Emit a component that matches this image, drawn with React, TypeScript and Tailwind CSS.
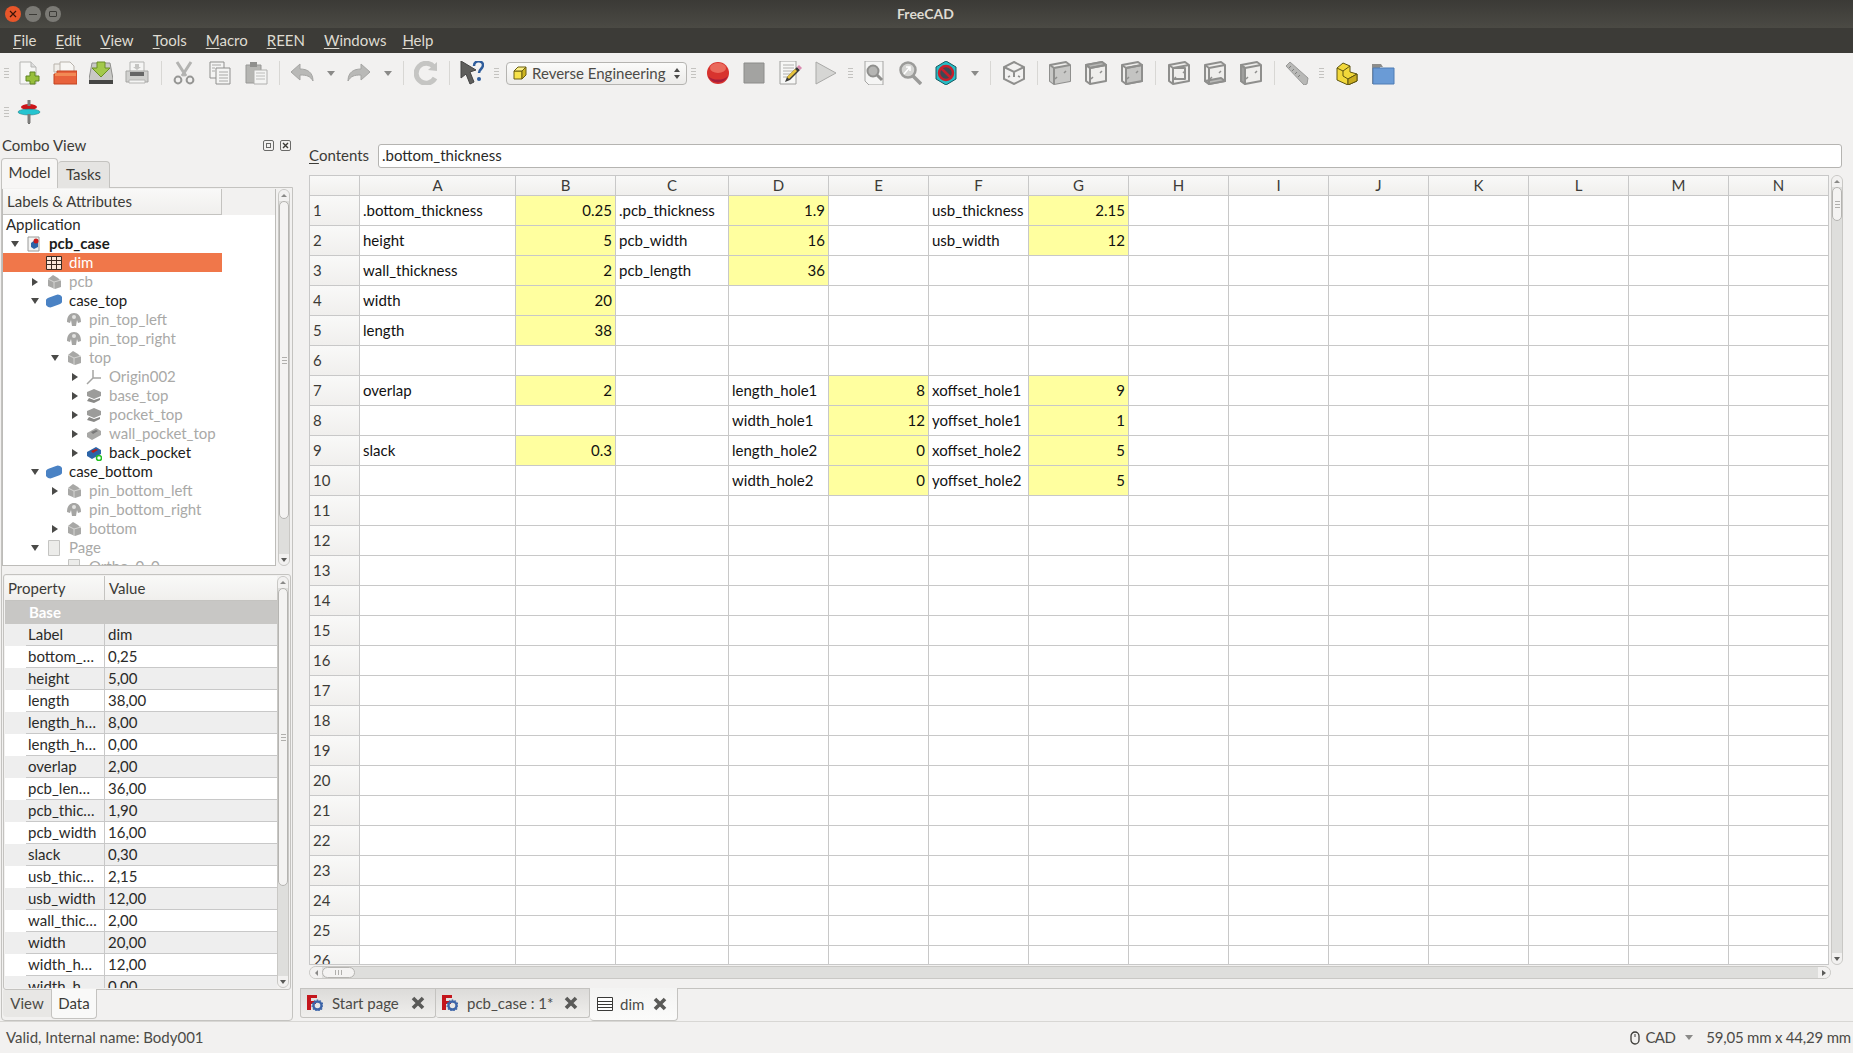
import React from "react";

const FONT = "font-['Lato','Noto_Sans',sans-serif]";

const Grip = () => (
  <div className="flex h-6 w-[12px] shrink-0 flex-col items-center justify-center gap-[2px]">
    <span className="h-px w-[5px] bg-[#c4c3c0]" />
    <span className="h-px w-[5px] bg-[#c4c3c0]" />
    <span className="h-px w-[5px] bg-[#c4c3c0]" />
    <span className="h-px w-[5px] bg-[#c4c3c0]" />
  </div>
);

const Sep = () => (
  <div className="flex h-6 w-[10px] shrink-0 justify-center">
    <span className="h-6 w-px bg-[#d8d7d4]" />
  </div>
);

const Slot = ({ children }: { children: React.ReactNode }) => (
  <div className="flex h-[26px] w-9 shrink-0 items-center justify-center">{children}</div>
);

const Drop = () => (
  <div className="flex w-[21px] shrink-0 justify-center">
    <span className="h-0 w-0 border-x-[4px] border-t-[5px] border-x-transparent border-t-[#8a8a88]" />
  </div>
);

const Ico = ({ children, s = 24 }: { children: React.ReactNode; s?: number }) => (
  <svg width={s} height={s} viewBox="0 0 24 24">
    {children}
  </svg>
);

const NewIcon = () => (
  <Ico>
    <path d="M3 1h11l5 5v17H3z" fill="#f6f6f5" stroke="#b5b5b3" />
    <path d="M14 1v5h5" fill="#ddd" stroke="#b5b5b3" />
    <path d="M14 12h5v4h4v5h-4v3h-5v-3h-4v-5h4z" transform="translate(-1 -1)" fill="#98bf3c" stroke="#5f8520" />
  </Ico>
);
const OpenIcon = () => (
  <Ico>
    <path d="M1 3h9l2 2v6H1z" fill="#f0eeea" stroke="#b9b3ac" />
    <path d="M7 1h10l4 4v8H7z" fill="#f7f6f4" stroke="#b9b3ac" />
    <path d="M4 10h20v13H1V13h3z" fill="#e8623c" stroke="#c2421f" />
    <path d="M2 12h21v3H2z" fill="#f28a55" />
  </Ico>
);
const SaveIcon = () => (
  <Ico>
    <path d="M3 2h18l3 16v4H0v-4z" fill="#c9c9c6" stroke="#8f8f8c" />
    <path d="M0 19h24v4H0z" fill="#464644" />
    <path d="M8 1h8v6h5l-9 9-9-9h5z" fill="#a3c94a" stroke="#6a8e25" />
  </Ico>
);
const PrintIcon = () => (
  <Ico>
    <path d="M5 1h14v10H5z" fill="#f5f5f4" stroke="#b5b5b3" />
    <path d="M1 10h22v11H1z" fill="#d0d0ce" stroke="#a5a5a3" />
    <path d="M5 11h14v4H5z" fill="#666" />
    <path d="M4 19h16v3H4z" fill="#f5f5f4" stroke="#b5b5b3" />
    <path d="M10 3h4v3h2l-4 3-4-3h2z" fill="#c5c5c3" />
  </Ico>
);
const CutIcon = () => (
  <Ico>
    <path d="M5 1l9 14M19 1l-9 14" stroke="#b3b3b1" strokeWidth="3" fill="none" />
    <circle cx="6" cy="19" r="3.4" fill="none" stroke="#969694" strokeWidth="2" />
    <circle cx="18" cy="19" r="3.4" fill="none" stroke="#969694" strokeWidth="2" />
  </Ico>
);
const CopyIcon = () => (
  <Ico>
    <path d="M2 1h14v16H2z" fill="#f4f4f3" stroke="#8f8f8d" />
    <path d="M8 7h14v16H8z" fill="#f4f4f3" stroke="#8f8f8d" />
    <path d="M4 4h9M4 7h3M4 10h3M11 11h9M11 14h9M11 17h9M11 20h9" stroke="#a8a8a6" />
  </Ico>
);
const PasteIcon = () => (
  <Ico>
    <path d="M2 4h15v18H2z" fill="#b5b5b2" stroke="#989896" />
    <path d="M6 1h7v5H6z" fill="#8f8f8d" />
    <path d="M10 9h13v14H10z" fill="#f4f4f3" stroke="#b0b0ae" />
    <path d="M12 12h9M12 15h9M12 18h9" stroke="#bcbcba" />
  </Ico>
);
const UndoIcon = ({ flip }: { flip?: boolean }) => (
  <Ico>
    <g transform={flip ? "translate(24 0) scale(-1 1)" : undefined}>
      <path d="M1 11l9-8v5c7 0 13 3 13 12-3-5-6-6-13-6v5z" fill="#b9b9b7" stroke="#a5a5a3" strokeLinejoin="round" />
    </g>
  </Ico>
);
const RefreshIcon = () => (
  <Ico>
    <path d="M20 6a10 10 0 1 0 1 11" fill="none" stroke="#c5c5c3" strokeWidth="5" />
    <path d="M14 9l9 1V1z" fill="#c5c5c3" />
  </Ico>
);
const WhatIcon = () => (
  <Ico>
    <path d="M1 0l15 9-6 2 4 10-4 2-4-10-5 4z" fill="#5e5e5c" stroke="#444" strokeLinejoin="round" />
    <path d="M14 5c0-6 9-6 9-1 0 4-4 4-4 8" fill="none" stroke="#2f5d9c" strokeWidth="2.5" />
    <circle cx="19" cy="18" r="2" fill="#2f5d9c" />
  </Ico>
);
const YellowBox = ({ s = 14 }: { s?: number }) => (
  <svg width={s} height={s} viewBox="0 0 14 14">
    <path d="M1 5h8v8H1z" fill="#f6e24a" stroke="#6a5f10" />
    <path d="M1 5l4-4h8L9 5z" fill="#fbf08a" stroke="#6a5f10" />
    <path d="M9 5l4-4v8l-4 4z" fill="#cdb420" stroke="#6a5f10" />
  </svg>
);
const RecordIcon = () => (
  <Ico>
    <circle cx="12" cy="12" r="11" fill="#d8332e" />
    <ellipse cx="12" cy="7" rx="8" ry="5" fill="#ea6a5c" />
    <path d="M2 15a11 11 0 0 0 20 0 12 8 0 0 1-20 0z" fill="#a81e3a" />
  </Ico>
);
const StopIcon = () => (
  <Ico>
    <path d="M2 2h20v20H2z" fill="#a3a3a1" stroke="#8c8c8a" />
  </Ico>
);
const EditIcon = () => (
  <Ico>
    <path d="M2 0h16v23H2z" fill="#f7f7f6" stroke="#a0a09e" />
    <path d="M5 4h11M5 7h11M5 10h11M5 13h7M5 16h5" stroke="#b0b0ae" />
    <path d="M7 21l2-5 10-10 3 3-10 10z" fill="#3a3a38" />
    <path d="M19 6l2-2 3 3-2 2z" fill="#d98ab0" />
    <path d="M9 16l8-8 2 2-8 8z" fill="#e6c23c" />
  </Ico>
);
const PlayIcon = () => (
  <Ico>
    <path d="M2 1l20 11L2 23z" fill="#d6d6d4" stroke="#a9a9a7" />
  </Ico>
);
const FitIcon = () => (
  <Ico>
    <path d="M3 0h18v24H7l-4-4z" fill="#f5f5f4" stroke="#a5a5a3" />
    <circle cx="11" cy="10" r="5.5" fill="#b5b5b3" stroke="#8f8f8d" strokeWidth="2" />
    <path d="M15 14l5 5" stroke="#8f8f8d" strokeWidth="3" />
  </Ico>
);
const ZoomSelIcon = () => (
  <Ico>
    <circle cx="10" cy="9" r="7.5" fill="#d5d5d3" stroke="#9b9b99" strokeWidth="2.5" />
    <path d="M15 15l8 8" stroke="#9b9b99" strokeWidth="3.5" />
    <path d="M6 13l6-7m-4 0h4v4" stroke="#fff" strokeWidth="1.5" fill="none" />
  </Ico>
);
const NoColorIcon = () => (
  <Ico>
    <path d="M12 0l10 6v12l-10 6-10-6V6z" fill="#26bcc4" stroke="#175a62" />
    <circle cx="12" cy="12" r="7" fill="#3d4a55" stroke="#c8202c" strokeWidth="2.5" />
    <path d="M7.5 7.5l9 9" stroke="#c8202c" strokeWidth="2.5" />
  </Ico>
);
const CubeIcon = ({ v }: { v: string }) => (
  <Ico>
    {v === "iso" ? (
      <g fill="none" stroke="#8f8f8d" strokeWidth="2">
        <path d="M12 1l10 5v12l-10 5-10-5V6z" />
        <path d="M2 6l10 5 10-5M12 11v5" />
        <path d="M6 16l2-1M18 16l-2-1" strokeWidth="1.5" />
      </g>
    ) : (
      <g stroke="#8f8f8d" strokeWidth="2" strokeLinejoin="round">
        <path d="M2 4l16-3 4 3v16l-16 3-4-3z" fill="#efeeec" />
        {v === "front" && <path d="M2 4l4 2v17l-4-3zM6 6l16-2v16l-16 3z" fill="#c8c8c6" stroke="none" />}
        {v === "top" && <path d="M2 4l16-3 4 3-16 3z" fill="#b9b9b7" />}
        {v === "right" && <path d="M6 7l16-3v16l-16 3z" fill="#c4c4c2" />}
        {v === "rear" && <path d="M6 7h12v11H6z" fill="#efeeec" />}
        {v === "bottom" && <path d="M2 20l4 3 16-3-4-3z" fill="#b9b9b7" />}
        {v === "left" && <path d="M2 4l4 3v16l-4-3z" fill="#9f9f9d" />}
        <path d="M2 4l4 3 16-3M6 7v16" fill="none" />
        <path d="M7 18l2-2M16 12l2-2" strokeWidth="1.5" />
      </g>
    )}
  </Ico>
);
const RulerIcon = () => (
  <Ico>
    <path d="M1 5l4-4 18 16-1 6-3 1z" fill="#b8b8b6" stroke="#9a9a98" />
    <path d="M6 5l-2 2M9 8l-2 2M12 11l-2 2M15 14l-2 2" stroke="#7f7f7d" />
  </Ico>
);
const PartIcon = () => (
  <Ico>
    <path d="M2 7l6-5 7 3v6l7 2v7l-9 4-11-5z" fill="#f2d83a" stroke="#5e5410" strokeLinejoin="round" />
    <path d="M2 7l6 3 7-5M8 10v5l5 3 9-5M13 18v6" fill="none" stroke="#5e5410" />
    <path d="M13 18l9-5v7l-9 4z" fill="#c9ac1e" stroke="#5e5410" />
  </Ico>
);
const FolderIcon = () => (
  <Ico>
    <path d="M1 3h9l2 3h-3v17H1z" fill="#8d8d8b" />
    <path d="M2 7h21v16H2z" fill="#6a9bd6" stroke="#4f7cb5" />
  </Ico>
);
const PinIcon = () => (
  <Ico>
    <path d="M11 0h2v24h-2z" fill="#70706e" />
    <ellipse cx="12" cy="7" rx="8" ry="3" fill="#cc1418" />
    <ellipse cx="12" cy="12" rx="11" ry="3" fill="#25c4d0" stroke="#15727a" strokeWidth="0.5" />
    <path d="M10.5 0h3v6h-3zM10.5 14h3v9h-3z" fill="#7c7c7a" />
  </Ico>
);

const Arrow = ({ open }: { open?: boolean }) =>
  open ? (
    <span className="h-0 w-0 border-x-[4px] border-t-[6px] border-x-transparent border-t-[#4a4a48]" />
  ) : (
    <span className="h-0 w-0 border-y-[4px] border-l-[6px] border-y-transparent border-l-[#4a4a48]" />
  );

const GrayBody = () => (
  <svg width="16" height="16" viewBox="0 0 16 16">
    <path d="M2 5l5-4 5 3 3 3v6l-6 2-7-3z" fill="#a8a8a6" />
    <path d="M2 5l6 3v7M8 8l7-2" fill="none" stroke="#d5d5d3" />
  </svg>
);
const Blob = () => (
  <svg width="16" height="16" viewBox="0 0 16 16">
    <rect x="-1" y="3" width="18" height="10" rx="5" transform="rotate(-20 8 8)" fill="#4a82c4" />
  </svg>
);
const PinBody = () => (
  <svg width="16" height="16" viewBox="0 0 16 16">
    <path d="M1 10c0-6 3-9 7-9s7 3 7 9l-3 1-1-3-1 6H6L5 8l-1 3z" fill="#a5a5a3" />
    <circle cx="8" cy="5" r="2" fill="#e2e2e0" />
  </svg>
);
const OriginIcon = () => (
  <svg width="16" height="16" viewBox="0 0 16 16">
    <path d="M7 1v8M7 9l-6 6M7 9h8" stroke="#a5a5a3" strokeWidth="1.5" fill="none" />
  </svg>
);
const StackIcon = () => (
  <svg width="16" height="16" viewBox="0 0 16 16">
    <path d="M1 4l7-3 7 3v4l-7 3-7-3z" fill="#9c9c9a" />
    <path d="M3 10l5 2 6-2v2l-6 3-7-2z" fill="#8a8a88" />
  </svg>
);
const PadIcon = () => (
  <svg width="16" height="16" viewBox="0 0 16 16">
    <path d="M1 7l9-5 5 3v4l-9 5-5-3z" fill="#a8a8a6" />
    <path d="M5 6l5-2 2 1-5 3z" fill="#777" />
  </svg>
);
const PocketIcon = () => (
  <svg width="16" height="16" viewBox="0 0 16 16">
    <path d="M1 7l9-5 5 3v4l-9 5-5-3z" fill="#2c64a8" />
    <path d="M5 6l5-2 2 1-5 3z" fill="#b81c1c" />
    <circle cx="13" cy="13" r="2.5" fill="#fff" stroke="#22c022" strokeWidth="1.5" />
  </svg>
);
const DocIcon = () => (
  <svg width="16" height="16" viewBox="0 0 16 16">
    <path d="M2 1h11v14H2z" fill="#f3f3f2" stroke="#9a9a98" />
    <path d="M5 7l4-3 3 3v4l-4 2-3-2z" fill="#2c64a8" />
    <circle cx="10" cy="5" r="2.5" fill="#c81c1c" />
  </svg>
);
const SheetIcon = ({ light }: { light?: boolean }) => (
  <svg width="16" height="14" viewBox="0 0 16 14">
    <path d="M0.5 0.5h15v13h-15z" fill={light ? "#fbe6da" : "#fff"} stroke="#3a2a22" />
    <path d="M0 4.5h16M0 8.5h16M5.5 0v14M10.5 0v14" stroke="#3a2a22" />
  </svg>
);
const PageIcon = ({ s = 16 }: { s?: number }) => (
  <svg width={s} height={s} viewBox="0 0 16 16">
    <path d="M2.5 0.5h11v15h-11z" fill="#ececea" stroke="#c4c4c2" />
  </svg>
);

type TreeRow = { label: string; level: number; arrow?: "open" | "closed"; icon: React.ReactNode; dim?: boolean; bold?: boolean; sel?: boolean };

const treeRows: TreeRow[] = [
  { label: "pcb_case", level: 0, arrow: "open", icon: <DocIcon />, bold: true },
  { label: "dim", level: 1, icon: <SheetIcon light />, sel: true },
  { label: "pcb", level: 1, arrow: "closed", icon: <GrayBody />, dim: true },
  { label: "case_top", level: 1, arrow: "open", icon: <Blob /> },
  { label: "pin_top_left", level: 2, icon: <PinBody />, dim: true },
  { label: "pin_top_right", level: 2, icon: <PinBody />, dim: true },
  { label: "top", level: 2, arrow: "open", icon: <GrayBody />, dim: true },
  { label: "Origin002", level: 3, arrow: "closed", icon: <OriginIcon />, dim: true },
  { label: "base_top", level: 3, arrow: "closed", icon: <StackIcon />, dim: true },
  { label: "pocket_top", level: 3, arrow: "closed", icon: <StackIcon />, dim: true },
  { label: "wall_pocket_top", level: 3, arrow: "closed", icon: <PadIcon />, dim: true },
  { label: "back_pocket", level: 3, arrow: "closed", icon: <PocketIcon /> },
  { label: "case_bottom", level: 1, arrow: "open", icon: <Blob /> },
  { label: "pin_bottom_left", level: 2, arrow: "closed", icon: <GrayBody />, dim: true },
  { label: "pin_bottom_right", level: 2, icon: <PinBody />, dim: true },
  { label: "bottom", level: 2, arrow: "closed", icon: <GrayBody />, dim: true },
  { label: "Page", level: 1, arrow: "open", icon: <PageIcon />, dim: true },
  { label: "Ortho_0_0", level: 2, icon: <PageIcon />, dim: true },
];

const levelPad = ["pl-[7px]", "pl-[27px]", "pl-[47px]", "pl-[67px]"];

const props = [
  ["Label", "dim"],
  ["bottom_…", "0,25"],
  ["height", "5,00"],
  ["length", "38,00"],
  ["length_h…", "8,00"],
  ["length_h…", "0,00"],
  ["overlap", "2,00"],
  ["pcb_len…", "36,00"],
  ["pcb_thic…", "1,90"],
  ["pcb_width", "16,00"],
  ["slack", "0,30"],
  ["usb_thic…", "2,15"],
  ["usb_width", "12,00"],
  ["wall_thic…", "2,00"],
  ["width", "20,00"],
  ["width_h…", "12,00"],
  ["width_h…", "0,00"],
];

const cols = ["A", "B", "C", "D", "E", "F", "G", "H", "I", "J", "K", "L", "M", "N"];

// row number -> column letter -> value; yellow cells hold the numbers
const cells: Record<string, string> = {
  A1: ".bottom_thickness", B1: "0.25", C1: ".pcb_thickness", D1: "1.9", F1: "usb_thickness", G1: "2.15",
  A2: "height", B2: "5", C2: "pcb_width", D2: "16", F2: "usb_width", G2: "12",
  A3: "wall_thickness", B3: "2", C3: "pcb_length", D3: "36",
  A4: "width", B4: "20",
  A5: "length", B5: "38",
  A7: "overlap", B7: "2", D7: "length_hole1", E7: "8", F7: "xoffset_hole1", G7: "9",
  D8: "width_hole1", E8: "12", F8: "yoffset_hole1", G8: "1",
  A9: "slack", B9: "0.3", D9: "length_hole2", E9: "0", F9: "xoffset_hole2", G9: "5",
  D10: "width_hole2", E10: "0", F10: "yoffset_hole2", G10: "5",
};

const rowNums = Array.from({ length: 26 }, (_, i) => i + 1);

const FcLogo = () => (
  <svg width="16" height="16" viewBox="0 0 16 16">
    <path d="M0 0h10v3H4v3h5v3H4v6H0z" fill="#c4161c" />
    <circle cx="10.5" cy="10.5" r="4" fill="none" stroke="#3c64a8" strokeWidth="2.4" />
    <circle cx="10.5" cy="10.5" r="5.4" fill="none" stroke="#3c64a8" strokeWidth="1.2" strokeDasharray="1.5 1.5" />
  </svg>
);

const CloseX = () => (
  <svg width="14" height="14" viewBox="0 0 14 14">
    <path d="M2 2l10 10M12 2L2 12" stroke="#5a5a58" strokeWidth="3.6" />
  </svg>
);

const VScroll = ({ thumbH }: { thumbH: string }) => (
  <div className="flex h-full w-[12px] shrink-0 flex-col rounded-full border border-[#c9c8c5] bg-[#dededc]">
    <div className="flex h-[11px] shrink-0 items-center justify-center rounded-t-full bg-[#f2f1f0]">
      <span className="h-0 w-0 border-x-[3px] border-b-[3px] border-x-transparent border-b-[#8a8a88]" />
    </div>
    <div className={`${thumbH} flex shrink-0 flex-col items-center justify-center gap-[2px] rounded-full border border-[#b5b4b1] bg-[#f4f3f2]`}>
      <span className="h-px w-[5px] bg-[#b0afac]" />
      <span className="h-px w-[5px] bg-[#b0afac]" />
      <span className="h-px w-[5px] bg-[#b0afac]" />
    </div>
    <div className="flex-1" />
    <div className="flex h-[11px] shrink-0 items-center justify-center rounded-b-full bg-[#f2f1f0]">
      <span className="h-0 w-0 border-x-[3px] border-t-[4px] border-x-transparent border-t-[#5a5a58]" />
    </div>
  </div>
);

export default function App() {
  return (
    <div className={`${FONT} flex h-[1053px] w-[1853px] flex-col overflow-hidden bg-[#f2f1f0] text-[15px] text-[#3c3b37]`}>
      {/* Title bar */}
      <div className="relative flex h-[28px] shrink-0 items-center justify-center bg-gradient-to-b from-[#3b3a36] to-[#4b4a44] pb-[2px] pr-[2px] text-[14px] font-bold text-[#dfdbd2]">
        <div className="absolute left-[5px] top-[6px] flex gap-[4px]">
          <div className="flex h-4 w-4 items-center justify-center rounded-full bg-[#e8562a] text-[#4a1a0a]">
            <svg width="8" height="8" viewBox="0 0 8 8"><path d="M1 1l6 6M7 1L1 7" stroke="#3a1408" strokeWidth="1.2" /></svg>
          </div>
          <div className="flex h-4 w-4 items-center justify-center rounded-full bg-[#7b7a75]">
            <span className="h-px w-2 bg-[#3c3b37]" />
          </div>
          <div className="flex h-4 w-4 items-center justify-center rounded-full bg-[#7b7a75]">
            <span className="h-[6px] w-2 rounded-[1px] border border-[#3c3b37]" />
          </div>
        </div>
        FreeCAD
      </div>

      {/* Menu bar */}
      <div className="flex h-[25px] shrink-0 items-center gap-[19px] bg-[#3c3b37] pl-[13px] text-[15px] text-[#dfdbd2]">
        {["File", "Edit", "View", "Tools", "Macro", "REEN", "Windows", "Help"].map((m) => (
          <span key={m} className={m === "Help" ? "-ml-[3px]" : ""}>
            <span className="underline decoration-1 underline-offset-2 [text-decoration-skip-ink:none]">{m[0]}</span>
            {m.slice(1)}
          </span>
        ))}
      </div>

      {/* Toolbars */}
      <div className="flex h-[41px] shrink-0 items-center pb-[1px]">
        <div className="w-[11px] shrink-0 overflow-hidden"><Grip /></div>
        <Slot><NewIcon /></Slot>
        <Slot><OpenIcon /></Slot>
        <Slot><SaveIcon /></Slot>
        <Slot><PrintIcon /></Slot>
        <div className="w-[1px] shrink-0" />
        <Sep />
        <Slot><CutIcon /></Slot>
        <Slot><CopyIcon /></Slot>
        <Slot><PasteIcon /></Slot>
        <Sep />
        <Slot><UndoIcon /></Slot>
        <Drop />
        <Slot><UndoIcon flip /></Slot>
        <Drop />
        <Sep />
        <Slot><RefreshIcon /></Slot>
        <Sep />
        <Slot><WhatIcon /></Slot>
        <Grip />
        <div className="ml-[4px] flex h-[23px] w-[181px] shrink-0 items-center gap-[5px] rounded-[4px] border border-[#b5b4b1] bg-gradient-to-b from-[#fbfbfa] to-[#ecebe9] pl-[6px] text-[#4c4b47]">
          <YellowBox />
          <span className="flex-1 whitespace-nowrap">Reverse Engineering</span>
          <div className="mr-[6px] flex flex-col gap-[3px]">
            <span className="h-0 w-0 border-x-[3px] border-b-[4px] border-x-transparent border-b-[#4a4a48]" />
            <span className="h-0 w-0 border-x-[3px] border-t-[4px] border-x-transparent border-t-[#4a4a48]" />
          </div>
        </div>
        <Grip />
        <div className="w-[1px] shrink-0" />
        <Slot><RecordIcon /></Slot>
        <Slot><StopIcon /></Slot>
        <Slot><EditIcon /></Slot>
        <Slot><PlayIcon /></Slot>
        <Grip />
        <Slot><FitIcon /></Slot>
        <Slot><ZoomSelIcon /></Slot>
        <Slot><NoColorIcon /></Slot>
        <Drop />
        <Sep />
        <div className="w-[1px] shrink-0" />
        <Slot><CubeIcon v="iso" /></Slot>
        <Sep />
        <Slot><CubeIcon v="front" /></Slot>
        <Slot><CubeIcon v="top" /></Slot>
        <Slot><CubeIcon v="right" /></Slot>
        <Sep />
        <div className="w-[1px] shrink-0" />
        <Slot><CubeIcon v="rear" /></Slot>
        <Slot><CubeIcon v="bottom" /></Slot>
        <Slot><CubeIcon v="left" /></Slot>
        <Sep />
        <Slot><RulerIcon /></Slot>
        <Grip />
        <div className="w-[2px] shrink-0" />
        <Slot><PartIcon /></Slot>
        <Slot><FolderIcon /></Slot>
      </div>
      <div className="flex h-[36px] shrink-0 items-start pt-[6px]">
        <Grip />
        <div className="-ml-[1px] flex h-6 w-[36px] items-center justify-center">
          <PinIcon />
        </div>
      </div>

      {/* Main area */}
      <div className="flex min-h-0 flex-1">
        {/* Left dock */}
        <div className="flex w-[296px] shrink-0 flex-col pl-[1px] pr-[3px]">
          <div className="flex h-[28px] shrink-0 items-center justify-between pl-[1px] pr-[2px] pt-[2px]">
            <span>Combo View</span>
            <div className="flex gap-[6px]">
              <span className="flex h-[11px] w-[11px] items-center justify-center rounded-[2px] border border-[#6a6a68]">
                <span className="h-[5px] w-[5px] border border-[#6a6a68]" />
              </span>
              <span className="flex h-[11px] w-[11px] items-center justify-center rounded-[2px] border border-[#6a6a68]">
                <svg width="7" height="7" viewBox="0 0 7 7"><path d="M1 1l5 5M6 1L1 6" stroke="#3c3b37" strokeWidth="1.4" /></svg>
              </span>
            </div>
          </div>
          <div className="z-10 -mb-px flex h-[30px] shrink-0 items-end">
            <div className="flex h-[30px] w-[57px] items-center justify-center rounded-t-[4px] border border-b-0 border-[#c4c3c0] bg-[#f7f6f5] pb-[2px]">Model</div>
            <div className="flex h-[27px] w-[52px] items-center justify-center rounded-t-[4px] border border-b-0 border-l-0 border-[#c4c3c0] bg-[#e5e4e2] pb-[1px]">Tasks</div>
          </div>
          <div className="flex min-h-0 flex-1 flex-col rounded-b-[4px] border border-[#c4c3c0] pt-px">
            <div className="flex h-[377px] shrink-0 gap-[2px] pr-[2px]">
              <div className="flex min-w-0 flex-1 flex-col overflow-hidden border-b border-l border-r border-[#bdbcb9] bg-white">
                <div className="flex h-[26px] shrink-0 bg-[#f2f1f0]">
                  <div className="flex w-[219px] items-center border-b border-r border-[#c4c3c0] bg-gradient-to-b from-[#f9f9f8] to-[#f0efed] pl-[4px]">Labels &amp; Attributes</div>
                </div>
                <div className="flex h-[19px] shrink-0 items-center pl-[3px] text-[#2a2a28]">Application</div>
                {treeRows.map((r) => (
                  <div
                    key={r.label}
                    className={`flex h-[19px] w-[219px] shrink-0 items-center ${levelPad[r.level]} ${r.sel ? "bg-[#f0774a] text-white" : r.dim ? "text-[#a9a9a7]" : "text-[#1c1c1a]"} ${r.bold ? "font-bold" : ""}`}
                  >
                    <span className="flex w-[10px] shrink-0 justify-center">
                      {r.arrow && <Arrow open={r.arrow === "open"} />}
                    </span>
                    <span className="ml-[1px] flex w-[25px] shrink-0 justify-center">{r.icon}</span>
                    <span className="whitespace-nowrap pl-[3px]">{r.label}</span>
                  </div>
                ))}
              </div>
              <VScroll thumbH="h-[318px]" />
            </div>

            {/* Property editor */}
            <div className="ml-[1px] mr-px mt-[8px] flex min-h-0 flex-1 rounded-[3px] border border-[#c4c3c0] p-px">
              <div className="flex min-w-0 flex-1 flex-col overflow-hidden">
                <div className="flex h-[25px] shrink-0 border-b border-[#c4c3c0] bg-gradient-to-b from-[#f9f9f8] to-[#f0efed]">
                  <div className="flex w-[100px] items-center border-r border-[#c4c3c0] pl-[3px]">Property</div>
                  <div className="flex flex-1 items-center pl-[4px]">Value</div>
                </div>
                <div className="flex h-[23px] shrink-0 items-center bg-[#c8c7c5] pl-[24px] font-bold text-white">Base</div>
                {props.map(([k, v], i) => (
                  <div key={i} className={`flex h-[22px] shrink-0 ${i % 2 === 0 ? "bg-[#eeeeee]" : "bg-white"}`}>
                    <div className="w-[21px] shrink-0" />
                    <div className="flex min-w-0 flex-1 items-center border-b border-[#c8c8c8]">
                      <div className="flex h-full w-[79px] shrink-0 items-center overflow-hidden whitespace-nowrap border-r border-[#c8c8c8] pl-[2px] text-[#2a2a28]">{k}</div>
                      <div className="pl-[3px] text-[#2a2a28]">{v}</div>
                    </div>
                  </div>
                ))}
              </div>
              <VScroll thumbH="h-[298px]" />
            </div>
            <div className="flex h-[30px] shrink-0 pl-px">
              <div className="flex h-[27px] w-[48px] items-center justify-center rounded-bl-[4px] bg-[#e8e7e5] text-[#4c4b47]">View</div>
              <div className="-mt-px flex h-[30px] w-[46px] items-center justify-center rounded-b-[4px] border border-t-0 border-[#c4c3c0] bg-[#f9f9f8]">Data</div>
            </div>
          </div>
        </div>

        {/* Spreadsheet */}
        <div className="flex min-w-0 flex-1 flex-col">
          <div className="mt-[13px] flex h-[24px] shrink-0 items-center pl-[13px] pr-[11px] pt-[1px]">
            <span className="w-[69px] shrink-0">
              <span className="underline decoration-1 underline-offset-2">C</span>ontents
            </span>
            <div className="flex h-[24px] flex-1 items-center rounded-[3px] border border-[#b5b4b1] bg-white pl-[3px] text-[#2a2a28]">.bottom_thickness</div>
          </div>
          <div className="mt-[8px] flex h-[790px] shrink-0 pl-[13px] pr-[10px]">
            <div className="min-w-0 flex-1 overflow-hidden border-b border-l border-t border-[#c8c8c8] bg-white">
              <div className="grid w-[1520px] grid-cols-[50px_156px_100px_113px_100px_100px_100px_100px_100px_100px_100px_100px_100px_100px_100px] grid-rows-[20px] auto-rows-[30px]">
                <div className="border-b border-r border-[#c8c8c8] bg-gradient-to-b from-[#f9f9f8] to-[#f0efed]" />
                {cols.map((c) => (
                  <div key={c} className="flex items-center justify-center border-b border-r border-[#c8c8c8] bg-gradient-to-b from-[#f9f9f8] to-[#f0efed]">{c}</div>
                ))}
                {rowNums.map((n) => (
                  <React.Fragment key={n}>
                    <div className="flex items-center border-b border-r border-[#c8c8c8] bg-gradient-to-b from-[#f9f9f8] to-[#f0efed] pl-[3px]">{n}</div>
                    {cols.map((c) => {
                      const v = cells[c + n];
                      const num = v !== undefined && /^[0-9.]+$/.test(v);
                      return (
                        <div
                          key={c}
                          className={`flex items-center overflow-hidden whitespace-nowrap border-b border-r border-[#c8c8c8] px-[3px] text-[#111] ${num ? "justify-end bg-[#ffff9f]" : ""}`}
                        >
                          {v}
                        </div>
                      );
                    })}
                  </React.Fragment>
                ))}
              </div>
            </div>
            <div className="ml-[2px]">
              <VScroll thumbH="h-[34px]" />
            </div>
          </div>
          {/* Horizontal scrollbar */}
          <div className="ml-[13px] mr-[22px] mt-[1px] flex h-[13px] shrink-0 items-center rounded-full border border-[#c9c8c5] bg-[#dededc]">
            <div className="flex h-full w-[12px] items-center justify-center rounded-l-full bg-[#f2f1f0]">
              <span className="h-0 w-0 border-y-[3px] border-r-[3px] border-y-transparent border-r-[#8a8a88]" />
            </div>
            <div className="flex h-full w-[33px] items-center justify-center gap-[2px] rounded-full border border-[#b5b4b1] bg-[#f4f3f2]">
              <span className="h-[5px] w-px bg-[#b0afac]" />
              <span className="h-[5px] w-px bg-[#b0afac]" />
              <span className="h-[5px] w-px bg-[#b0afac]" />
            </div>
            <div className="flex-1" />
            <div className="flex h-full w-[12px] items-center justify-center rounded-r-full bg-[#f2f1f0]">
              <span className="h-0 w-0 border-y-[3px] border-l-[4px] border-y-transparent border-l-[#5a5a58]" />
            </div>
          </div>
          {/* Document tabs */}
          <div className="ml-[4px] mt-[9px] flex h-[33px] shrink-0 items-start border-t border-[#c4c3c0]">
            <div className="flex h-[29px] w-[136px] items-center rounded-b-[3px] border border-t-0 border-[#c4c3c0] bg-gradient-to-b from-[#dcdbd9] to-[#f0efed] pl-[6px] text-[#4c4b47]">
              <FcLogo />
              <span className="ml-[9px] flex-1">Start page</span>
              <span className="mr-[10px]"><CloseX /></span>
            </div>
            <div className="flex h-[29px] w-[154px] items-center rounded-b-[3px] border border-l-0 border-t-0 border-[#c4c3c0] bg-gradient-to-b from-[#dcdbd9] to-[#f0efed] pl-[6px] text-[#4c4b47]">
              <FcLogo />
              <span className="ml-[9px] flex-1">pcb_case : 1*</span>
              <span className="mr-[11px]"><CloseX /></span>
            </div>
            <div className="-mt-px flex h-[33px] w-[88px] items-center rounded-b-[4px] border border-l-0 border-t-0 border-[#c4c3c0] bg-gradient-to-b from-[#f4f4f3] to-[#fbfbfa] pl-[7px] text-[#4c4b47]">
              <svg width="16" height="14" viewBox="0 0 16 14">
                <path d="M0.5 0.5h15v13h-15z" fill="#fff" stroke="#3a3a38" />
                <path d="M0 4.5h16M0 7.5h16M0 10.5h16" stroke="#3a3a38" />
              </svg>
              <span className="ml-[7px] flex-1">dim</span>
              <span className="mr-[10px]"><CloseX /></span>
            </div>
          </div>
        </div>
      </div>

      {/* Status bar */}
      <div className="flex h-[32px] shrink-0 items-center border-t border-[#d8d7d4] pl-[6px] pr-[2px] text-[#4c4b47]">
        <span className="flex-1">Valid, Internal name: Body001</span>
        <svg width="10" height="14" viewBox="0 0 10 14">
          <rect x="1" y="1" width="8" height="12" rx="4" fill="none" stroke="#3c3b37" strokeWidth="1.3" />
          <path d="M5 3v3" stroke="#3c3b37" />
        </svg>
        <span className="ml-[5px] tracking-[-0.6px]">CAD</span>
        <span className="ml-[10px] h-0 w-0 border-x-[4px] border-t-[5px] border-x-transparent border-t-[#8a8a88]" />
        <span className="ml-[13px] tracking-[-0.2px]">59,05 mm x 44,29 mm</span>
      </div>
    </div>
  );
}
